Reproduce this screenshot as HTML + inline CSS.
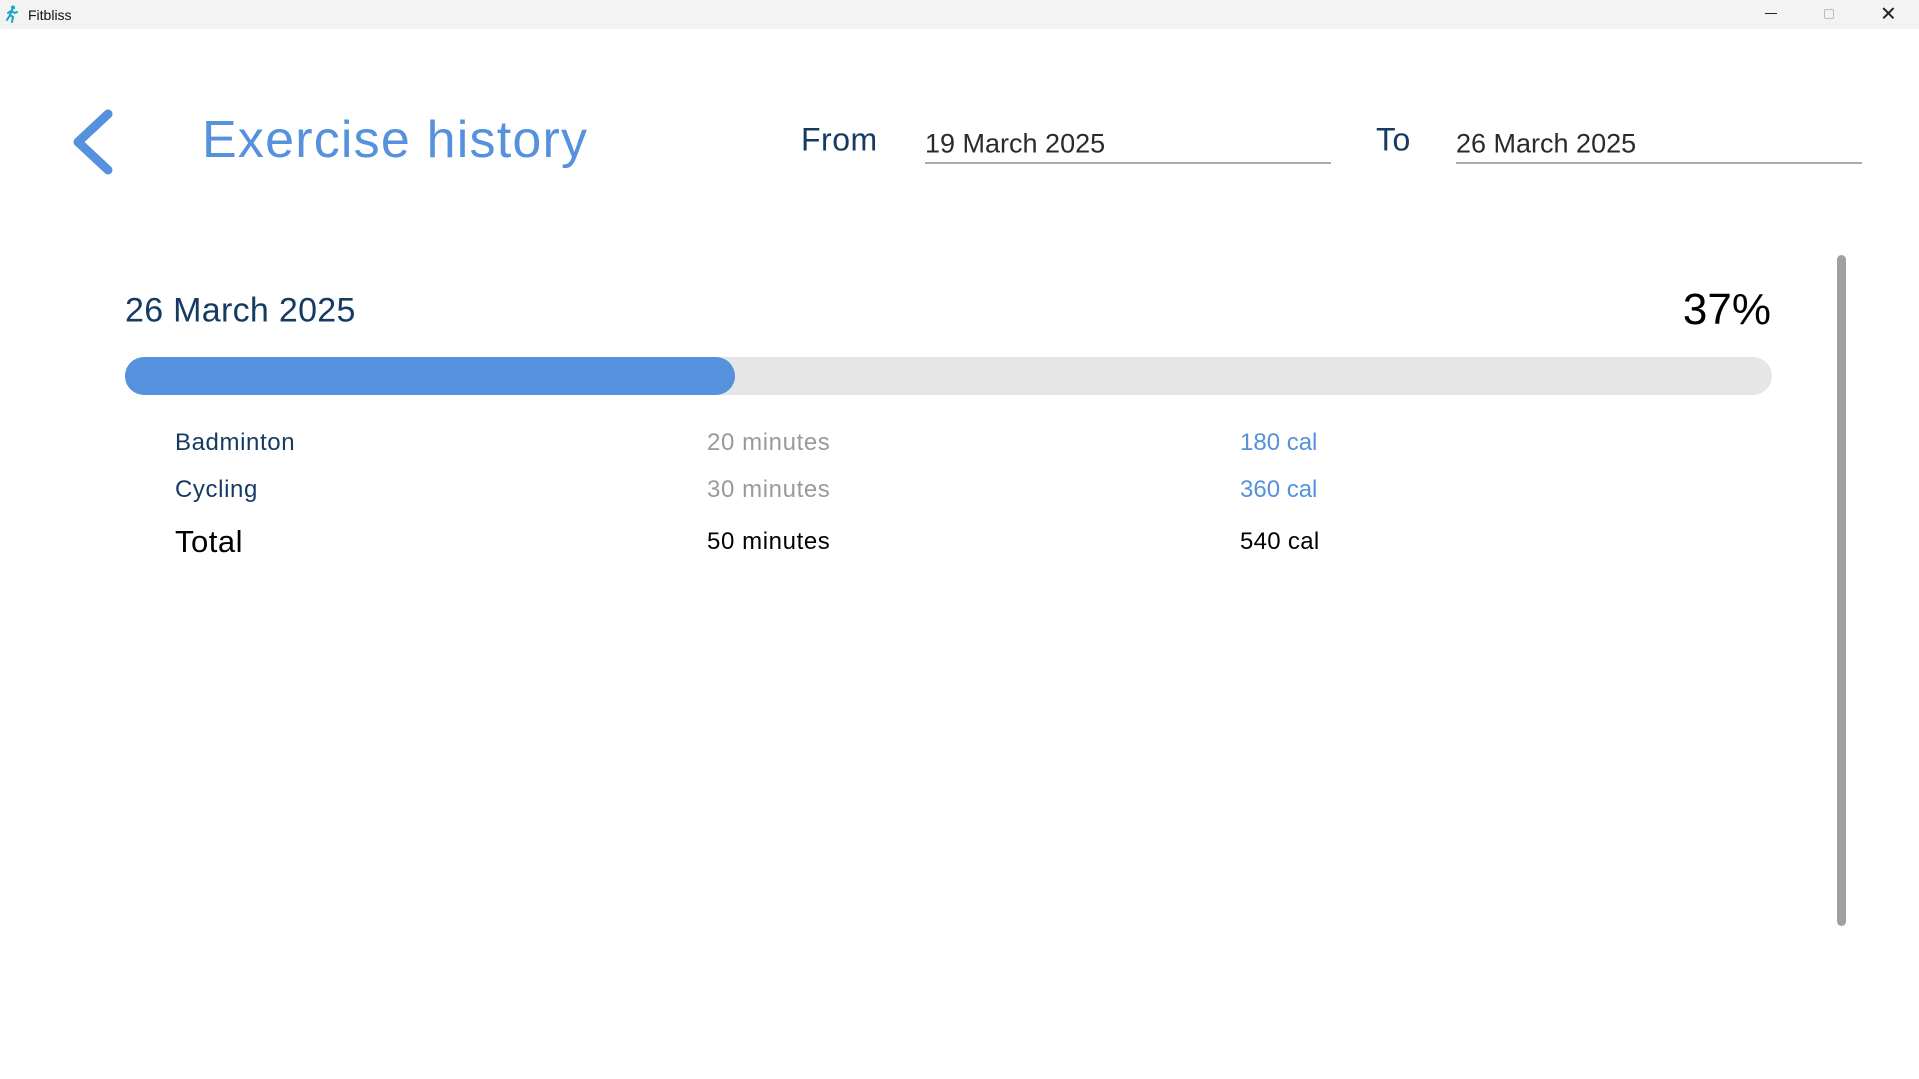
<!DOCTYPE html>
<html><head><meta charset="utf-8"><style>
body{margin:0;width:1919px;height:1079px;background:#fff;position:relative;overflow:hidden;font-family:"Liberation Sans",sans-serif}
.a{position:absolute;white-space:nowrap}
.c{transform:translateY(-50%)}
</style></head><body>
<div class="a" style="left:0;top:0;width:1919px;height:29px;background:#f3f3f3"></div>
<svg class="a" style="left:4px;top:5px" width="16" height="18" viewBox="0 0 16 18"><circle cx="9" cy="2.5" r="2" fill="#1aa6c9"/><path d="M8 5 L6 10 L9 12 L8 17 M6 10 L3 15 M7 6 L11 8 L13 7 M7 6 L4 8" stroke="#1aa6c9" stroke-width="2" fill="none" stroke-linecap="round"/></svg>
<div class="a c" style="left:28px;top:15px;font-size:14px;color:#111">Fitbliss</div>
<div class="a" style="left:1765px;top:13px;width:12px;height:1px;background:#222"></div>
<div class="a" style="left:1824px;top:9px;width:8px;height:8px;border:1px solid #bbb;border-radius:2px"></div>
<div class="a c" style="left:1880px;top:14px;font-size:20px;color:#222">✕</div>

<svg class="a" style="left:68px;top:104px" width="52" height="74" viewBox="0 0 52 74"><path d="M40 10 L10 38 L40 66" stroke="#5591dc" stroke-width="9" fill="none" stroke-linecap="round" stroke-linejoin="round"/></svg>
<div class="a c" style="left:202px;top:140px;font-size:52px;letter-spacing:1.2px;color:#5591dc">Exercise history</div>
<div class="a c" style="left:801px;top:140px;font-size:32px;letter-spacing:0.5px;color:#163b63">From</div>
<div class="a c" style="left:925px;top:144px;font-size:27px;color:#2a2a2a">19 March 2025</div>
<div class="a" style="left:925px;top:162px;width:406px;height:2px;background:#aaa"></div>
<div class="a c" style="left:1376px;top:140px;font-size:32px;letter-spacing:0.5px;color:#163b63">To</div>
<div class="a c" style="left:1456px;top:144px;font-size:27px;color:#2a2a2a">26 March 2025</div>
<div class="a" style="left:1456px;top:162px;width:406px;height:2px;background:#aaa"></div>

<div class="a" style="left:1837px;top:255px;width:9px;height:671px;background:#a0a0a0;border-radius:5px"></div>

<div class="a c" style="left:125px;top:311px;font-size:34px;letter-spacing:0.3px;color:#163b63">26 March 2025</div>
<div class="a c" style="right:148px;top:310px;font-size:44px;color:#000">37%</div>
<div class="a" style="left:125px;top:357px;width:1647px;height:38px;background:#e6e6e6;border-radius:19px"></div>
<div class="a" style="left:125px;top:357px;width:610px;height:38px;background:#5591dc;border-radius:19px"></div>

<div class="a c" style="left:175px;top:443px;font-size:24px;letter-spacing:0.6px;color:#163b63">Badminton</div>
<div class="a c" style="left:707px;top:443px;font-size:24px;letter-spacing:0.6px;color:#9a9a9a">20 minutes</div>
<div class="a c" style="left:1240px;top:443px;font-size:24px;color:#5591dc">180 cal</div>
<div class="a c" style="left:175px;top:490px;font-size:24px;letter-spacing:0.6px;color:#163b63">Cycling</div>
<div class="a c" style="left:707px;top:490px;font-size:24px;letter-spacing:0.6px;color:#9a9a9a">30 minutes</div>
<div class="a c" style="left:1240px;top:490px;font-size:24px;color:#5591dc">360 cal</div>
<div class="a c" style="left:175px;top:542px;font-size:31px;letter-spacing:0.5px;color:#000">Total</div>
<div class="a c" style="left:707px;top:542px;font-size:24px;letter-spacing:0.6px;color:#000">50 minutes</div>
<div class="a c" style="left:1240px;top:542px;font-size:24px;letter-spacing:0.3px;color:#000">540 cal</div>
</body></html>
